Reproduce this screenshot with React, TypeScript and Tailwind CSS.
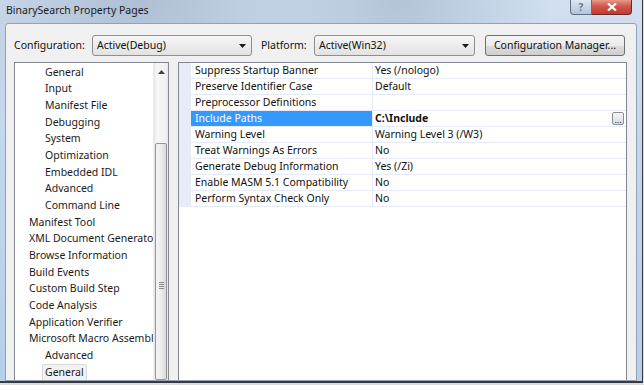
import React from "react";

const FONT = { fontFamily: '"Noto Sans", "Open Sans", sans-serif' };

type TreeItem = { label: string; level: number; selected?: boolean };

const TREE_ITEMS: TreeItem[] = [
  { label: "General", level: 1 },
  { label: "Input", level: 1 },
  { label: "Manifest File", level: 1 },
  { label: "Debugging", level: 1 },
  { label: "System", level: 1 },
  { label: "Optimization", level: 1 },
  { label: "Embedded IDL", level: 1 },
  { label: "Advanced", level: 1 },
  { label: "Command Line", level: 1 },
  { label: "Manifest Tool", level: 0 },
  { label: "XML Document Generator", level: 0 },
  { label: "Browse Information", level: 0 },
  { label: "Build Events", level: 0 },
  { label: "Custom Build Step", level: 0 },
  { label: "Code Analysis", level: 0 },
  { label: "Application Verifier", level: 0 },
  { label: "Microsoft Macro Assembler", level: 0 },
  { label: "Advanced", level: 1 },
  { label: "General", level: 1, selected: true },
];

type PropRow = { name: string; value: string; selected?: boolean };

const PROPS: PropRow[] = [
  { name: "Suppress Startup Banner", value: "Yes (/nologo)" },
  { name: "Preserve Identifier Case", value: "Default" },
  { name: "Preprocessor Definitions", value: "" },
  { name: "Include Paths", value: "C:\\Include", selected: true },
  { name: "Warning Level", value: "Warning Level 3 (/W3)" },
  { name: "Treat Warnings As Errors", value: "No" },
  { name: "Generate Debug Information", value: "Yes (/Zi)" },
  { name: "Enable MASM 5.1 Compatibility", value: "No" },
  { name: "Perform Syntax Check Only", value: "No" },
];

function ComboBox({ text, width }: { text: string; width: string }) {
  return (
    <div
      className={`${width} h-[21px] flex items-center justify-between pl-[4px] pr-[5px] rounded-[3px] border border-[#8e8f8f] bg-[linear-gradient(180deg,#f6f6f6,#ececec_50%,#e2e2e2)]`}
    >
      <span className="text-[10.5px] text-[#111]">{text}</span>
      <svg width="7" height="4" viewBox="0 0 7 4">
        <path d="M0 0H7L3.5 4Z" fill="#1a1a1a" />
      </svg>
    </div>
  );
}

function TreeScrollbar() {
  return (
    <div className="w-[15px] flex flex-col bg-[linear-gradient(90deg,#e6e6e6,#f7f7f7_20%,#f2f2f2_80%,#e6e6e6)] border-l border-[#ececec]">
      <div className="h-[17px] flex items-center justify-center">
        <svg width="7" height="4" viewBox="0 0 7 4">
          <path d="M0 4H7L3.5 0Z" fill="#404040" />
        </svg>
      </div>
      <div className="h-[63px]" />
      <div className="flex-1 mx-[1px] rounded-[2px] border border-[#959595] bg-[linear-gradient(90deg,#f4f4f4,#ececec_55%,#d8d8d8)] flex flex-col items-center">
        <div className="h-[138px]" />
        <div className="flex flex-col gap-[1px]">
          <div className="w-[5px] h-[1px] bg-[#8a8a8a]" />
          <div className="w-[5px] h-[1px] bg-[#8a8a8a]" />
          <div className="w-[5px] h-[1px] bg-[#8a8a8a]" />
          <div className="w-[5px] h-[1px] bg-[#8a8a8a]" />
        </div>
      </div>
    </div>
  );
}

export default function App() {
  return (
    <div className="w-[644px] h-[385px] bg-[#dcdcdc] overflow-hidden" style={FONT}>
      <div className="w-[643px] h-[383px] border-r border-b-2 border-[#3a3a3a] overflow-hidden flex flex-col bg-[radial-gradient(ellipse_at_22%_0%,#aebfd4_0%,transparent_30%),radial-gradient(ellipse_at_62%_0%,#b3c4d8_0%,transparent_28%),linear-gradient(180deg,#d2e0f0,#c3d6ed_40%,#b6cfec)]">
        {/* title bar */}
        <div className="h-[23px] flex items-start justify-between">
          <div className="pl-[6px] pt-[3px] text-[10.5px] text-[#1b1b1b]">
            BinarySearch Property Pages
          </div>
          <div className="flex mr-[10px]">
            <div className="w-[22px] h-[15px] rounded-bl-[4px] border border-t-0 border-[#5f6f86] bg-[linear-gradient(180deg,#dfe8f3,#c7d5e6_50%,#b4c5db)] flex items-center justify-center text-[10px] font-bold text-[#6d7888] leading-none">
              ?
            </div>
            <div className="w-[40px] h-[15px] rounded-br-[4px] border border-t-0 border-l-0 border-[#6b2a25] bg-[linear-gradient(180deg,#e99a8c,#d0564a_45%,#c23b30)] flex items-center justify-center">
              <svg width="10" height="8" viewBox="0 0 10 8">
                <path d="M1 0.5L9 7.5M9 0.5L1 7.5" stroke="#fff" strokeWidth="2.2" />
              </svg>
            </div>
          </div>
        </div>

        {/* client area */}
        <div className="flex-1 flex pl-[5px] pr-[7px] min-h-0">
          <div className="flex-1 flex flex-col bg-[#f0f0f0] border border-[#90a2b8] rounded-tl-[3px] rounded-tr-[3px] pt-[11px] pl-[8px] pr-[9px] min-h-0">
            {/* config row */}
            <div className="flex items-center h-[21px]">
              <span className="text-[10.5px] text-[#111] w-[78px]">Configuration:</span>
              <ComboBox text="Active(Debug)" width="w-[160px]" />
              <span className="text-[10.5px] text-[#111] ml-[9px] w-[53px]">Platform:</span>
              <ComboBox text="Active(Win32)" width="w-[161px]" />
              <div className="ml-[10px] w-[140px] h-[21px] rounded-[3px] border border-[#707070] bg-[linear-gradient(180deg,#f4f4f4,#ebebeb_50%,#dddddd_51%,#cfcfcf)] flex items-center justify-center text-[10.5px] text-[#111]">
                Configuration Manager...
              </div>
            </div>

            {/* panels */}
            <div className="flex mt-[6px] flex-1 min-h-0 gap-[9px]">
              {/* tree */}
              <div className="w-[155px] flex border border-[#828790] border-b-0 bg-white">
                <div className="flex-1 overflow-hidden pt-[1px]">
                  {TREE_ITEMS.map((it, i) => (
                    <div
                      key={i}
                      className={`h-[16.67px] flex items-center whitespace-nowrap ${it.level === 1 ? "pl-[27px]" : "pl-[11px]"}`}
                    >
                      <span
                        className={`text-[10.5px] text-[#1a1a1a] leading-[15px] px-[2px] ${it.selected ? "bg-[#f2f2f2] border border-[#d9d9d9] rounded-[2px]" : "border border-transparent"}`}
                      >
                        {it.label}
                      </span>
                    </div>
                  ))}
                </div>
                <TreeScrollbar />
              </div>

              {/* property grid */}
              <div className="w-[449px] border border-[#828790] border-b-0 bg-white">
                {PROPS.map((p, i) => (
                  <div key={i} className="h-[16px] flex">
                    <div className="w-[12px] bg-[#e8ebf8]" />
                    <div
                      className={`w-[181px] pl-[4px] flex items-center text-[10.5px] whitespace-nowrap border-b border-[#e6eaf5] ${p.selected ? "bg-[#3399ff] text-white" : "text-[#111]"}`}
                    >
                      {p.name}
                    </div>
                    <div className="flex-1 flex items-center justify-between pl-[2px] pr-[2px] border-l border-b border-[#e6eaf5] text-[10.5px] text-[#111]">
                      <span className={p.selected ? "font-bold" : ""}>{p.value}</span>
                      {p.selected && (
                        <div className="w-[12px] h-[13px] rounded-[2px] border border-[#8e8f8f] bg-[linear-gradient(180deg,#f6f6f6,#dcdcdc)] flex items-end justify-center text-[9px] leading-[9px] text-[#222]">
                          ...
                        </div>
                      )}
                    </div>
                  </div>
                ))}
              </div>
            </div>
          </div>
        </div>
      </div>
    </div>
  );
}
